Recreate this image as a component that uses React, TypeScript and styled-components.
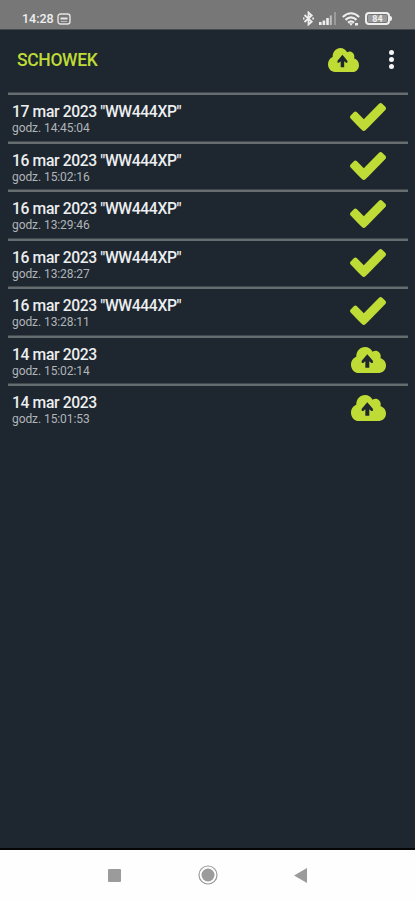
import React from 'react';
import styled, { createGlobalStyle } from 'styled-components';

const lime = '#bedb36';
const navy = '#1e262f';

const GlobalStyle = createGlobalStyle`
  * { box-sizing: border-box; }
  body { margin: 0; background: ${navy}; font-family: Roboto, "Liberation Sans", sans-serif; }
`;

const Screen = styled.div`
  width: 415px;
  height: 900px;
  display: flex;
  flex-direction: column;
  overflow: hidden;
  background: ${navy};
`;

const StatusBar = styled.div`
  flex: none;
  height: 30px;
  padding: 8px 23px 0 22px;
  display: flex;
  justify-content: space-between;
  background: #777777;
  border-bottom: 1px solid #454a4f;
  color: #eeeeee;
`;

const Clock = styled.span`
  width: 33px;
  font-size: 12.5px;
  line-height: 21px;
  font-weight: 500;
  white-space: nowrap;
`;

const StatusGroup = styled.div<{ $gap: number }>`
  display: flex;
  align-items: center;
  gap: ${(p) => p.$gap}px;
  height: 21px;
`;

const Battery = styled.div`
  display: flex;
  align-items: center;
`;

const BatteryBody = styled.div`
  width: 25px;
  height: 13px;
  border: 2px solid #eeeeee;
  border-radius: 4px;
  display: flex;
  align-items: center;
  justify-content: center;
  font-size: 9px;
  line-height: 8px;
  font-weight: 700;
  background: #9a9a9a;
  box-shadow: inset 0 0 0 1px #777777;
`;

const BatteryTip = styled.div`
  width: 2px;
  height: 5px;
  background: #eeeeee;
  border-radius: 0 2px 2px 0;
`;

const Header = styled.header`
  flex: none;
  height: 63px;
  padding: 0 20px 4px 17px;
  display: flex;
  align-items: center;
`;

const Title = styled.h1`
  flex: 1;
  margin: 0;
  font-size: 17.5px;
  font-weight: 500;
  letter-spacing: -0.35px;
  color: ${lime};
`;

const MenuDots = styled.div`
  width: 6px;
  margin-left: 30px;
  display: flex;
  flex-direction: column;
  align-items: flex-start;
  gap: 2px;
`;

const Dot = styled.span`
  width: 5px;
  height: 5px;
  border-radius: 50%;
  background: #f4f4f4;
`;

const List = styled.main`
  flex: 1;
  padding: 0 7px 0 8px;
`;

const Row = styled.div`
  height: 48.5px;
  border-top: 2px solid #666d71;
  box-shadow: 0 -1px #41494f;
  display: flex;
  justify-content: space-between;
  padding: 7px 22px 0 4px;
`;

const Label = styled.div`
  display: flex;
  flex-direction: column;
  padding-top: 1px;
`;

const Day = styled.span`
  font-size: 15.7px;
  line-height: 18px;
  font-weight: 500;
  letter-spacing: -0.38px;
  color: #eceeef;
  white-space: nowrap;
`;

const Hour = styled.span`
  font-size: 12px;
  line-height: 14px;
  letter-spacing: -0.08px;
  color: #b0b5b9;
  white-space: nowrap;
`;

const NavBar = styled.nav`
  flex: none;
  height: 52px;
  border-top: 2px solid #050608;
  background: #fefefe;
  display: grid;
  grid-template-columns: 14px 20px 13px;
  column-gap: 76.5px;
  padding-left: 107px;
  align-items: center;
  justify-items: center;
`;

const Icon = styled.svg`
  display: block;
  flex: none;
`;

const Cloud = ({ width, height }: { width: number; height: number }) => (
  <Icon width={width} height={height} viewBox="0 32 640 448" preserveAspectRatio="none">
    <path
      fill={lime}
      d="M537.600 226.600c4.100-10.700 6.400-22.400 6.400-34.600 0-53-43-96-96-96-19.700 0-38.100 6-53.300 16.200C367 64.200 315.300 32 256 32c-88.400 0-160 71.600-160 160 0 2.700.1 5.400.2 8.100C40.200 219.800 0 273.200 0 336c0 79.500 64.500 144 144 144h368c70.700 0 128-57.300 128-128 0-61.900-44-113.600-102.400-125.400z"
    />
    <path fill={navy} d="M298 156 400 270v36h-28l-38-28v112h-72V278l-38 28h-28v-36z" />
  </Icon>
);

const Check = () => (
  <Icon width="36" height="28" viewBox="121 334 1550 1188" preserveAspectRatio="none" fill={lime}>
    <path d="M1671 566q0 40-28 68l-724 724-136 136q-28 28-68 28t-68-28l-136-136-362-362q-28-28-28-68t28-68l136-136q28-28 68-28t68 28l294 295 656-657q28-28 68-28t68 28l136 136q28 28 28 68z" />
  </Icon>
);

const Bluetooth = () => (
  <Icon width="11" height="15" viewBox="0 0 11 15" fill="none" stroke="#eee" strokeWidth="1.800">
    <path d="M1.500 4 8.700 10.700 5.500 13.500V1.500l3.200 3L1.500 11" />
    <path d="M0 7.500h1.500M9.300 7.500h1.700" />
  </Icon>
);

const Signal = () => (
  <Icon width="18" height="13" viewBox="0 0 18 13" fill="#eee">
    <path d="M0 10h2.600v3H0zM3.600 8.500h2.600V13H3.600zM7.200 6h2.600v7H7.200z" />
    <path opacity=".6" d="M10.800 3.500h2V13h-2z" />
    <path opacity=".3" d="M15 0h2v13h-2z" />
  </Icon>
);

const Wifi = () => (
  <Icon width="18" height="14" viewBox="0 0 18 14" fill="none" stroke="#eee" strokeWidth="2.100">
    <path d="M.8 5q8.200-7.500 16.400 0M3.500 7.900q5.500-5 11 0M6 10.600q3-2.600 6 0" />
    <path d="m7 11.300 2 2.500 2-2.500zM13 11h3v2.500h-3z" fill="#eee" stroke="none" />
  </Icon>
);

const Notice = () => (
  <Icon width="14" height="12" viewBox="0 0 14 12" fill="none" stroke="#e4e4e4">
    <rect x="1" y="1" width="12" height="10" rx="2.500" strokeWidth="1.400" />
    <path d="M3.500 5.500h7" strokeWidth="2" />
    <path d="M4 8.500h6" strokeWidth=".6" />
  </Icon>
);

const entries = [
  { day: '17 mar 2023 "WW444XP"', hour: '14:45:04', sent: true },
  { day: '16 mar 2023 "WW444XP"', hour: '15:02:16', sent: true },
  { day: '16 mar 2023 "WW444XP"', hour: '13:29:46', sent: true },
  { day: '16 mar 2023 "WW444XP"', hour: '13:28:27', sent: true },
  { day: '16 mar 2023 "WW444XP"', hour: '13:28:11', sent: true },
  { day: '14 mar 2023', hour: '15:02:14', sent: false },
  { day: '14 mar 2023', hour: '15:01:53', sent: false },
];

const IconSlot = styled.div<{ $offset: number }>`
  padding-top: ${(p) => p.$offset}px;
`;

export default function App() {
  return (
    <>
      <GlobalStyle />
      <Screen>
        <StatusBar>
          <StatusGroup $gap={2}>
            <Clock>14:28</Clock>
            <Notice />
          </StatusGroup>
          <StatusGroup $gap={5}>
            <Bluetooth />
            <Signal />
            <Wifi />
            <Battery>
              <BatteryBody>84</BatteryBody>
              <BatteryTip />
            </Battery>
          </StatusGroup>
        </StatusBar>
        <Header>
          <Title>SCHOWEK</Title>
          <Cloud width={31} height={24} />
          <MenuDots>
            <Dot />
            <Dot />
            <Dot />
          </MenuDots>
        </Header>
        <List>
          {entries.map((e) => (
            <Row key={e.hour}>
              <Label>
                <Day>{e.day}</Day>
                <Hour>godz. {e.hour}</Hour>
              </Label>
              <IconSlot $offset={e.sent ? 1 : 2}>
                {e.sent ? <Check /> : <Cloud width={35} height={26} />}
              </IconSlot>
            </Row>
          ))}
        </List>
        <NavBar>
          <Icon width="13" height="13" viewBox="0 0 13 13">
            <rect width="13" height="13" rx="1" fill="#9b9b9b" />
          </Icon>
          <Icon width="20" height="20" viewBox="0 0 20 20">
            <circle cx="10" cy="10" r="9" fill="none" stroke="#9b9b9b" strokeWidth="1.200" />
            <circle cx="10" cy="10" r="6.500" fill="#9b9b9b" />
          </Icon>
          <Icon width="13" height="15" viewBox="0 0 13 15">
            <path d="M13 0v15L0 7.500z" fill="#9b9b9b" />
          </Icon>
        </NavBar>
      </Screen>
    </>
  );
}
